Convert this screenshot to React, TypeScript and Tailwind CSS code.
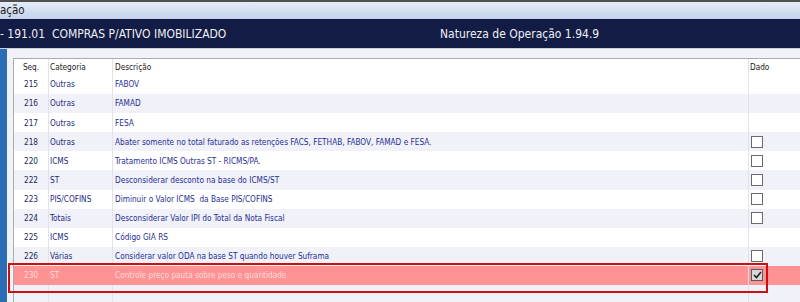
const rows: { seq: string; cat: string; desc: string; box: "none" | "off" | "on" }[] = [
  { seq: "215", cat: "Outras", desc: "FABOV", box: "none" },
  { seq: "216", cat: "Outras", desc: "FAMAD", box: "none" },
  { seq: "217", cat: "Outras", desc: "FESA", box: "none" },
  { seq: "218", cat: "Outras", desc: "Abater somente no total faturado as retenções FACS, FETHAB, FABOV, FAMAD e FESA.", box: "off" },
  { seq: "220", cat: "ICMS", desc: "Tratamento ICMS Outras ST - RICMS/PA.", box: "off" },
  { seq: "222", cat: "ST", desc: "Desconsiderar desconto na base do ICMS/ST", box: "off" },
  { seq: "223", cat: "PIS/COFINS", desc: "Diminuir o Valor ICMS  da Base PIS/COFINS", box: "off" },
  { seq: "224", cat: "Totais", desc: "Desconsiderar Valor IPI do Total da Nota Fiscal", box: "off" },
  { seq: "225", cat: "ICMS", desc: "Código GIA RS", box: "none" },
  { seq: "226", cat: "Várias", desc: "Considerar valor ODA na base ST quando houver Suframa", box: "off" },
  { seq: "230", cat: "ST", desc: "Controle preço pauta sobre peso e quantidade", box: "on" },
];

function Check({ on }: { on: boolean }) {
  if (on) {
    return (
      <span className="grid size-[12px] place-items-center border border-[#5a5a5a] bg-[#d8d8d8]">
        <svg width="9" height="8" viewBox="0 0 9 8">
          <path d="M1 4 L3.5 6.5 L8 1" fill="none" stroke="#222" strokeWidth="1.6" />
        </svg>
      </span>
    );
  }
  return <span className="block size-[12px] border border-[#6a6a6a] bg-white" />;
}

export default function App() {
  return (
    <div
      className="relative h-[302px] w-[800px] overflow-hidden bg-white"
      style={{ fontFamily: '"DejaVu Sans Condensed", "DejaVu Sans", sans-serif' }}
    >
      <div className="h-[2px] bg-[#505050]" />
      <div className="flex h-[17px] items-center bg-gradient-to-b from-[#e4ecf7] to-[#c3d3ea] text-[11.5px] text-[#1b1b1b]">
        <span>ação</span>
      </div>
      <div className="flex h-[30px] items-center border-b border-[#c8cdd8] bg-[#131c44] text-[12px] text-[#eef0f6]">
        <span className="w-[440px] shrink-0 whitespace-pre">- 191.01  COMPRAS P/ATIVO IMOBILIZADO</span>
        <span className="whitespace-pre">Natureza de Operação 1.94.9</span>
      </div>
      <div className="flex h-[253px]">
        <div className="w-[7px] shrink-0 bg-[#2a6db5]" />
        <div className="flex-1 bg-[#f1f2f7] pl-[6px] pt-[9px]">
          <div className="border-l border-t border-[#a9acb5] bg-white text-[8.2px]">
            <div className="flex h-[16px] items-center text-[#222]">
              <div className="w-[34px] shrink-0 text-center">Seq.</div>
              <div className="h-full w-[64px] shrink-0 border-l border-[#e2e3ea] pl-[1px] leading-[16px]">Categoria</div>
              <div className="h-full w-[636px] shrink-0 border-l border-[#e2e3ea] pl-[2px] leading-[16px]">Descrição</div>
              <div className="h-full flex-1 border-l border-[#e2e3ea] pl-[1px] leading-[16px]">Dado</div>
            </div>
            {rows.map((r, i) => {
              const hl = r.seq === "230";
              const bg = hl ? "bg-[#ff9292]" : i % 2 === 1 ? "bg-[#f0f1f9]" : "bg-white";
              return (
                <div key={r.seq} className={`flex h-[19.1px] items-center ${bg} ${hl ? "text-[#ffdcdc]" : ""}`}>
                  <div className={`w-[34px] shrink-0 text-center ${hl ? "" : "text-[#1e2a5a]"}`}>{r.seq}</div>
                  <div className={`flex h-full w-[64px] shrink-0 items-center border-l border-[#e2e3ea] pl-[1px] ${hl ? "border-transparent" : "text-[#1b2c7c]"}`}>
                    {r.cat}
                  </div>
                  <div className={`flex h-full w-[636px] shrink-0 items-center whitespace-pre border-l border-[#e2e3ea] pl-[2px] ${hl ? "border-transparent" : "text-[#1f2f95]"}`}>
                    {r.desc}
                  </div>
                  <div className="flex h-full flex-1 items-center border-l border-[#e2e3ea] pl-[2px]">
                    {r.box !== "none" && <Check on={r.box === "on"} />}
                  </div>
                </div>
              );
            })}
            <div className="flex h-[20px] bg-[#f0f1f9]">
              <div className="w-[34px] shrink-0" />
              <div className="w-[64px] shrink-0 border-l border-[#e2e3ea]" />
              <div className="w-[636px] shrink-0 border-l border-[#e2e3ea]" />
              <div className="flex-1 border-l border-[#e2e3ea]" />
            </div>
          </div>
        </div>
      </div>
      <div className="absolute left-[8px] top-[263px] h-[30px] w-[760px] border-2 border-[#cc1010]" />
    </div>
  );
}
